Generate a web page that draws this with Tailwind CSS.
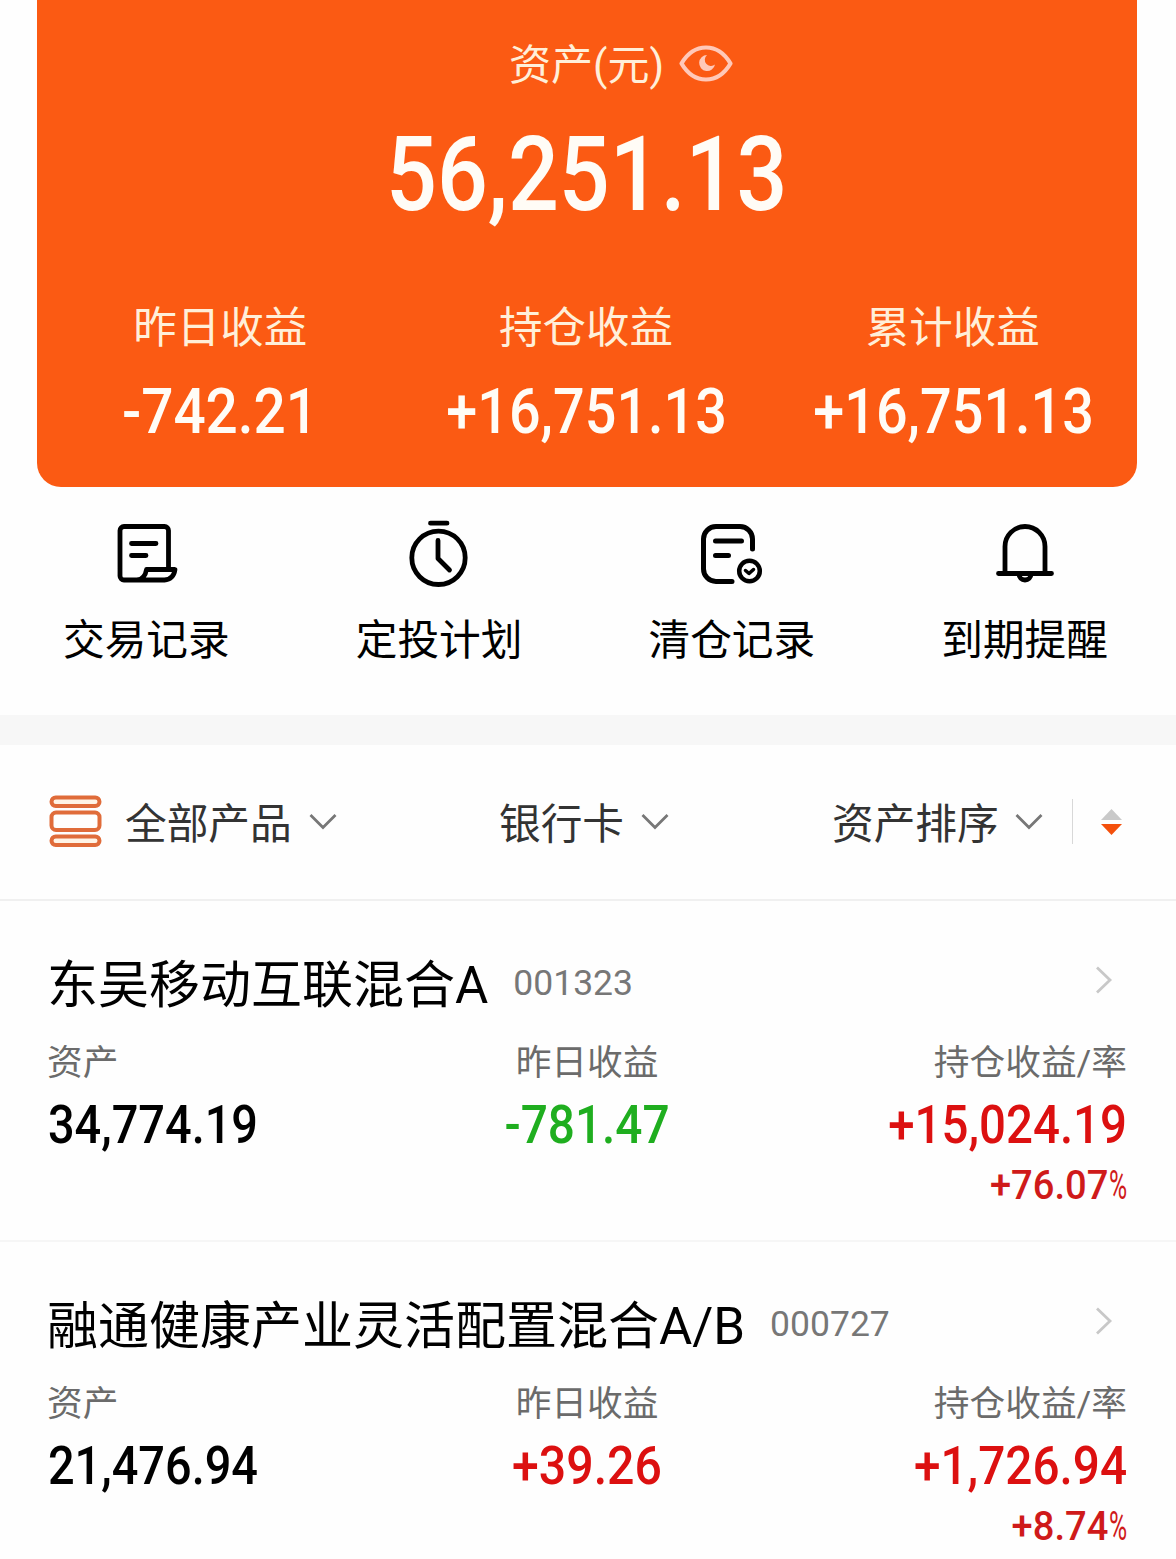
<!DOCTYPE html>
<html lang="zh-CN">
<head>
<meta charset="utf-8">
<title>资产</title>
<script src="https://cdn.jsdelivr.net/npm/@tailwindcss/browser@4"></script>
</head>
<body class="bg-white">
<div class="w-[1176px] h-[1559px] overflow-hidden bg-[#fefefe] text-black font-['Roboto','Noto_Sans_CJK_SC',sans-serif]">

  <!-- Summary card -->
  <section class="ml-[37px] w-[1100px] h-[487px] rounded-b-[24px] bg-[#fb5a13] text-[#fffcf6]">
    <div class="flex items-center pl-[472px] pt-[34px] h-[94px]">
      <span class="text-[42px] leading-[60px] pt-[4px] text-[#ffefd9] w-[154px] whitespace-nowrap">资产(元)</span>
      <svg class="ml-[16px] w-[54px] h-[38px]" viewBox="0 0 54 38" fill="none">
        <path d="M2.500 18.500C9 7.500 17 2.500 27 2.500s18 5 24.500 16C45 29.500 37 34.500 27 34.500S9 29.500 2.500 18.500Z" stroke="#ffc8b8" stroke-width="4.200" stroke-linejoin="round"/>
        <path d="M28 10a8 8 0 1 0 8 9.500a6 6 0 0 1-8-9.500Z" fill="#ffc8b8"/>
      </svg>
    </div>
    <div class="h-[190px] pt-[21px] text-center whitespace-nowrap">
      <span class="inline-block scale-x-[.87] text-[103px] leading-[120px] font-medium">56,251.13</span>
    </div>
    <div class="grid grid-cols-3 text-center whitespace-nowrap">
      <div class="flex flex-col items-center">
        <span class="text-[43.500px] leading-[88px] h-[88px] pt-[1px] text-[#ffefd9]">昨日收益</span>
        <span class="inline-block scale-x-[.9] text-[63px] leading-[80px] font-medium">-742.21</span>
      </div>
      <div class="flex flex-col items-center">
        <span class="text-[43.500px] leading-[88px] h-[88px] pt-[1px] pr-[2px] text-[#ffefd9]">持仓收益</span>
        <span class="inline-block scale-x-[.885] text-[63px] leading-[80px] font-medium">+16,751.13</span>
      </div>
      <div class="flex flex-col items-center">
        <span class="text-[43.500px] leading-[88px] h-[88px] pt-[1px] pr-[2px] text-[#ffefd9]">累计收益</span>
        <span class="inline-block scale-x-[.885] text-[63px] leading-[80px] font-medium">+16,751.13</span>
      </div>
    </div>
  </section>

  <!-- Shortcuts -->
  <nav class="grid grid-cols-4 w-[1171px] h-[228px] pt-[28px] text-[41.700px] leading-[60px] text-center">
    <div class="flex flex-col items-center gap-[22px]">
      <svg class="w-[74px] h-[74px]" viewBox="0 0 74 74" fill="none" stroke="#000" stroke-width="4.800" stroke-linecap="round" stroke-linejoin="round">
        <path d="M59.500 54V15.500a4 4 0 0 0-4-4H15a4 4 0 0 0-4 4V61a4 4 0 0 0 4 4H55.500Q64.500 64.500 66 54.500H37.500Q36 64 28 65"/>
        <path d="M22.500 28.500H47M22.500 40.500H37"/>
      </svg>
      <span>交易记录</span>
    </div>
    <div class="flex flex-col items-center gap-[22px]">
      <svg class="w-[74px] h-[74px]" viewBox="0 0 74 74" fill="none" stroke="#000" stroke-width="4.800" stroke-linecap="round" stroke-linejoin="round">
        <circle cx="36.500" cy="42.800" r="26.700"/>
        <path d="M28.500 8.200H45M36 25.500V43.500L47.500 55"/>
      </svg>
      <span>定投计划</span>
    </div>
    <div class="flex flex-col items-center gap-[22px]">
      <svg class="w-[74px] h-[74px]" viewBox="0 0 74 74" fill="none" stroke="#000" stroke-width="5" stroke-linecap="round" stroke-linejoin="round">
        <path d="M57.500 34V24A12.500 12.500 0 0 0 45 11.500H21A12.500 12.500 0 0 0 8.500 24V54A12.500 12.500 0 0 0 21 66.500H37"/>
        <path d="M20.500 26H46.500M20.500 40.500H33.500"/>
        <circle cx="54.500" cy="56" r="10.300" stroke-width="4.500"/>
        <path d="M50.500 55.500L54 58.500L58.500 54.500" stroke-width="3.500"/>
      </svg>
      <span>清仓记录</span>
    </div>
    <div class="flex flex-col items-center gap-[22px]">
      <svg class="w-[74px] h-[74px]" viewBox="0 0 74 74" fill="none" stroke="#000" stroke-width="4.800" stroke-linecap="round" stroke-linejoin="round">
        <path d="M17 58V31.500a20 20 0 0 1 40 0V58M10.500 58.500H63.500M31 59a6 6 0 0 0 12 0"/>
      </svg>
      <span>到期提醒</span>
    </div>
  </nav>

  <div class="h-[30px] bg-[#f7f7f7]"></div>

  <!-- Filters -->
  <div class="flex items-center h-[156px] pl-[49px] pb-[1px] border-b-2 border-[#f0f0f0] text-[41.700px] leading-[60px] text-[#333] whitespace-nowrap">
    <svg class="w-[53px] h-[53px]" viewBox="0 0 53 53" fill="#fff4e6" stroke="#e06c3a" stroke-width="4">
      <rect x="2.500" y="2.500" width="48" height="8.500" rx="4.250"/>
      <rect x="2.500" y="17.500" width="48" height="17.500" rx="4.500" fill="#fefefe"/>
      <rect x="2.500" y="41.500" width="48" height="8.500" rx="4.250"/>
    </svg>
    <span class="ml-[23px] pt-[6px] w-[167px]">全部产品</span>
    <svg class="ml-[17px] w-[28px] h-[18px]" viewBox="0 0 28 18" fill="none" stroke="#777" stroke-width="2.800"><path d="M1.500 2L14 14.500L26.500 2"/></svg>
    <span class="ml-[162px] pt-[6px] w-[125px]">银行卡</span>
    <svg class="ml-[17px] w-[28px] h-[18px]" viewBox="0 0 28 18" fill="none" stroke="#777" stroke-width="2.800"><path d="M1.500 2L14 14.500L26.500 2"/></svg>
    <span class="ml-[163px] pt-[6px] w-[167px]">资产排序</span>
    <svg class="ml-[16px] w-[28px] h-[18px]" viewBox="0 0 28 18" fill="none" stroke="#777" stroke-width="2.800"><path d="M1.500 2L14 14.500L26.500 2"/></svg>
    <span class="ml-[29px] w-px h-[45px] bg-[#d8d8d8]"></span>
    <svg class="ml-[28px] w-[21px] h-[26px]" viewBox="0 0 21 26"><path d="M0 11L10.500 0L21 11Z" fill="#c9c9c9"/><path d="M0 15L10.500 26L21 15Z" fill="#f4500c"/></svg>
  </div>

  <!-- Holdings -->
  <article class="h-[341px] pl-[47px] pr-[49px] pt-[42px] border-b-2 border-[#f6f6f6] whitespace-nowrap">
    <div class="flex items-center h-[80px]">
      <h2 class="pt-[5px] text-[51px] leading-[80px]">东吴移动互联混合A</h2>
      <span class="ml-[25px] text-[35.500px] leading-[80px] text-[#777]">001323</span>
      <svg class="ml-auto mr-[14px] mb-[6px] w-[18px] h-[28px]" viewBox="0 0 18 28" fill="none" stroke="#c8c8c8" stroke-width="2.800"><path d="M2 1.500L15 14L2 26.500"/></svg>
    </div>
    <div class="grid grid-cols-3 h-[76px] pt-[2px] text-[35.700px] leading-[76px] text-[#6b6b6b]">
      <span>资产</span><span class="text-center">昨日收益</span><span class="text-right">持仓收益/率</span>
    </div>
    <div class="grid grid-cols-3 text-[53px] leading-[52px] font-medium">
      <span class="pl-px scale-x-[.885] origin-left">34,774.19</span><span class="scale-x-[.9] text-center text-[#1fae1f]">-781.47</span><span class="scale-x-[.895] origin-right text-right text-[#dc1010]">+15,024.19</span>
    </div>
    <div class="text-[41px] leading-[68px] font-medium scale-x-[.93] origin-right text-right text-[#cf1a1a]">+76.07<span class="inline-block scale-x-[.65] origin-right -ml-[10px] font-normal">%</span></div>
  </article>

  <article class="h-[341px] pl-[47px] pr-[49px] pt-[42px] whitespace-nowrap">
    <div class="flex items-center h-[80px]">
      <h2 class="pt-[5px] text-[51px] leading-[80px]">融通健康产业灵活配置混合A/B</h2>
      <span class="ml-[25px] text-[35.500px] leading-[80px] text-[#777]">000727</span>
      <svg class="ml-auto mr-[14px] mb-[6px] w-[18px] h-[28px]" viewBox="0 0 18 28" fill="none" stroke="#c8c8c8" stroke-width="2.800"><path d="M2 1.500L15 14L2 26.500"/></svg>
    </div>
    <div class="grid grid-cols-3 h-[76px] pt-[2px] text-[35.700px] leading-[76px] text-[#6b6b6b]">
      <span>资产</span><span class="text-center">昨日收益</span><span class="text-right">持仓收益/率</span>
    </div>
    <div class="grid grid-cols-3 text-[53px] leading-[52px] font-medium">
      <span class="pl-px scale-x-[.885] origin-left">21,476.94</span><span class="scale-x-[.91] text-center text-[#dc1010]">+39.26</span><span class="scale-x-[.9] origin-right text-right text-[#dc1010]">+1,726.94</span>
    </div>
    <div class="text-[41px] leading-[68px] font-medium scale-x-[.93] origin-right text-right text-[#cf1a1a]">+8.74<span class="inline-block scale-x-[.65] origin-right -ml-[10px] font-normal">%</span></div>
  </article>
</div>
</body>
</html>
